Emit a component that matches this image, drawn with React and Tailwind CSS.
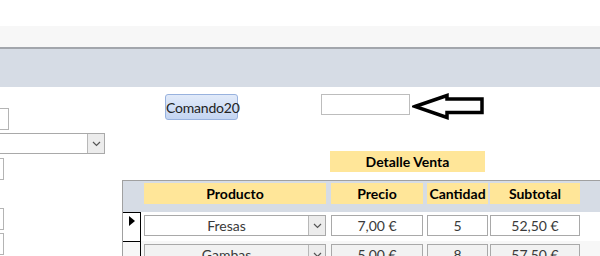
import React from 'react';

const font = { fontFamily: 'Lato, "Open Sans", sans-serif' };

const Chevron = () => (
    <svg width="9" height="6" viewBox="0 0 9 6">
        <path d="M1 1 L4.5 4.5 L8 1" fill="none" stroke="#555" strokeWidth="1.2" />
    </svg>
);

const ComboBox = ({ text, className, bg }) => (
    <div className={`flex border border-[#a9a9a9] ${bg} ${className}`}>
        <div className="flex-1 flex items-center justify-center text-[14px] text-[#3a3a3a]">{text}</div>
        <div className="w-[17px] border-l border-[#b8b8b8] bg-[#ececec] flex items-center justify-center">
            <Chevron />
        </div>
    </div>
);

const Cell = ({ text, className, bg }) => (
    <div
        className={`h-[21px] border border-[#a9a9a9] ${bg} flex items-center justify-center text-[14px] text-[#3a3a3a] ${className}`}
    >
        {text}
    </div>
);

const rows = [
    { producto: 'Fresas', precio: '7,00 €', cantidad: '5', subtotal: '52,50 €', bg: 'bg-white', current: true },
    { producto: 'Gambas', precio: '5,00 €', cantidad: '8', subtotal: '57,50 €', bg: 'bg-[#f2f2f2]', current: false },
];

export default function App() {
    return (
        <div className="w-[600px] h-[256px] overflow-hidden bg-white flex flex-col" style={font}>
            {/* cabecera del formulario */}
            <div className="h-[26px] shrink-0" />
            <div className="h-[23px] shrink-0 bg-[#f7f7f7] border-b-2 border-[#a2a6ac]" />
            <div className="h-[38px] shrink-0 bg-[#d6dce5]" />

            <div className="flex flex-1 min-h-0">
                {/* controles de la izquierda */}
                <div className="w-[105px] shrink-0 flex flex-col">
                    <div className="mt-[21px] w-[9px] h-[22px] border-y border-r border-[#b4b4b4]" />
                    <ComboBox className="mt-[3px] h-[21px] w-[105px] border-l-0" bg="bg-white" />
                    <div className="mt-[4px] w-[4px] h-[22px] border-y border-r border-[#b4b4b4]" />
                    <div className="mt-[28px] w-[4px] h-[22px] border-y border-r border-[#b4b4b4]" />
                    <div className="mt-[3px] w-[4px] h-[22px] border-y border-r border-[#b4b4b4]" />
                </div>

                <div className="flex-1 flex flex-col min-w-0">
                    <div className="mt-[7px] flex items-start">
                        <button className="ml-[60px] w-[73px] h-[26px] rounded-[3px] border border-[#98b2de] bg-gradient-to-b from-[#e1eaf9] to-[#c4d5f2] text-[14px] tracking-[-0.2px] text-[#222]">
                            Comando20
                        </button>
                        <div className="ml-[83px] w-[89px] h-[21px] border border-[#bdbdbd] bg-white" />
                        <svg className="ml-[2px] -mt-[1px]" width="74" height="27" viewBox="0 0 74 27">
                            <path
                                d="M3 13.5 L35 2.5 L35 6 L70 6 L70 19.5 L35 19.5 L35 24.5 Z"
                                fill="white"
                                stroke="black"
                                strokeWidth="3.5"
                                strokeLinejoin="miter"
                            />
                        </svg>
                    </div>

                    <div className="mt-[31px] ml-[225px] w-[155px] h-[21px] bg-[#ffe699] flex items-center justify-center text-[14px] font-bold text-black">
                        Detalle Venta
                    </div>

                    {/* subformulario */}
                    <div className="mt-[8px] ml-[17px] flex-1 border-t border-l border-[#a0a0a0] flex flex-col">
                        <div className="h-[31px] bg-[#d6dce5] flex items-start pt-[2px]">
                            <div className="w-[21px]" />
                            <div className="w-[182px] h-[21px] bg-[#ffe699] flex items-center justify-center text-[14px] font-bold">
                                Producto
                            </div>
                            <div className="ml-[5px] w-[92px] h-[21px] bg-[#ffe699] flex items-center justify-center text-[14px] font-bold">
                                Precio
                            </div>
                            <div className="ml-[4px] w-[61px] h-[21px] bg-[#ffe699] flex items-center justify-center text-[14px] font-bold">
                                Cantidad
                            </div>
                            <div className="ml-[2px] w-[90px] h-[21px] bg-[#ffe699] flex items-center justify-center text-[14px] font-bold">
                                Subtotal
                            </div>
                        </div>
                        {rows.map((r) => (
                            <div key={r.producto} className={`h-[29px] shrink-0 flex ${r.current ? 'bg-white' : 'bg-[#f7f7f7]'}`}>
                                <div className="w-[18px] border-t border-r border-black flex items-start justify-center pt-[3px]">
                                    {r.current && (
                                        <svg width="6" height="10" viewBox="0 0 6 10">
                                            <path d="M0 0 L6 5 L0 10 Z" fill="black" />
                                        </svg>
                                    )}
                                </div>
                                <div className="flex items-start pt-[3px]">
                                    <ComboBox className="ml-[3px] w-[182px] h-[21px]" text={r.producto} bg={r.bg} />
                                    <Cell className="ml-[5px] w-[92px]" text={r.precio} bg={r.bg} />
                                    <Cell className="ml-[4px] w-[61px]" text={r.cantidad} bg={r.bg} />
                                    <Cell className="ml-[2px] w-[90px]" text={r.subtotal} bg={r.bg} />
                                </div>
                            </div>
                        ))}
                    </div>
                </div>
            </div>
        </div>
    );
}
